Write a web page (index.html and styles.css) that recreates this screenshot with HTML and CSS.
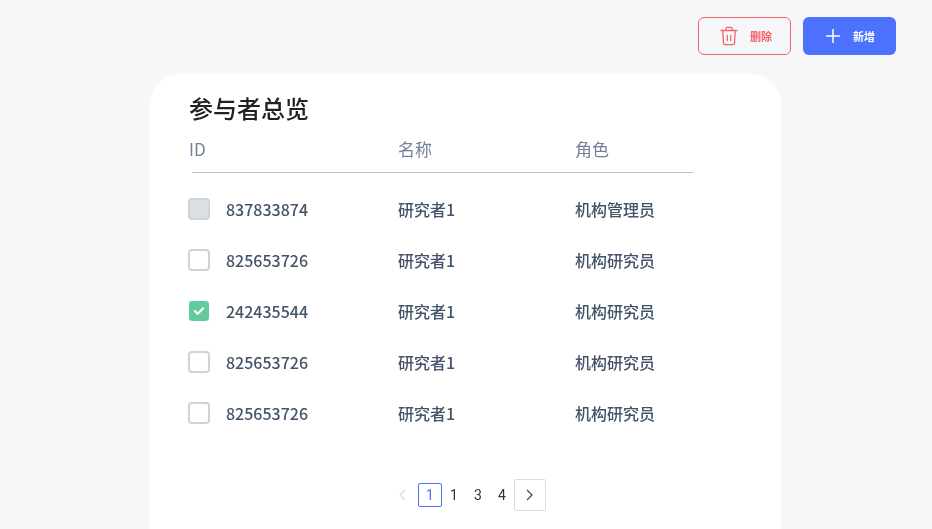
FILE: index.html
```html
<!DOCTYPE html>
<html lang="zh-CN">
<head>
<meta charset="utf-8">
<title>参与者总览</title>
<link rel="stylesheet" href="styles.css">
</head>
<body>
<div class="toolbar">
  <button class="btn btn-delete">
    <svg class="btn-icon" viewBox="0 0 18 20" width="18" height="20" fill="none" stroke="#f4646c" stroke-width="1.3" stroke-linecap="round" stroke-linejoin="round"><path d="M1 4.5h16M6 4.5V2.4q0-1 1-1h4q1 0 1 1v2.1M2.8 4.5l.7 12.6q.1 1.6 1.7 1.6h7.6q1.6 0 1.7-1.6l.7-12.6M7.3 9.5v5M10.7 9.5v5"/></svg>
    <span>删除</span>
  </button>
  <button class="btn btn-add">
    <svg class="btn-icon" viewBox="0 0 14 14" width="14" height="14" fill="none" stroke="#fff" stroke-width="1.5"><path d="M7 0v14M0 7h14"/></svg>
    <span>新增</span>
  </button>
</div>
<main class="card">
  <h1 class="title">参与者总览</h1>
  <div class="head">
    <span class="col-id">ID</span><span class="col-name">名称</span><span class="col-role">角色</span>
  </div>
  <div class="rule"></div>
  <div class="rows">
    <div class="row"><span class="check check-disabled"></span><span class="col-num">837833874</span><span class="col-name">研究者1</span><span class="col-role">机构管理员</span></div>
    <div class="row"><span class="check"></span><span class="col-num">825653726</span><span class="col-name">研究者1</span><span class="col-role">机构研究员</span></div>
    <div class="row"><span class="check check-on"><svg viewBox="0 0 12 10" width="12" height="10" fill="none" stroke="#fff" stroke-width="2.2" stroke-linecap="round" stroke-linejoin="round"><path d="M2 5.2l2.7 2.6L10 2.4"/></svg></span><span class="col-num">242435544</span><span class="col-name">研究者1</span><span class="col-role">机构研究员</span></div>
    <div class="row"><span class="check"></span><span class="col-num">825653726</span><span class="col-name">研究者1</span><span class="col-role">机构研究员</span></div>
    <div class="row"><span class="check"></span><span class="col-num">825653726</span><span class="col-name">研究者1</span><span class="col-role">机构研究员</span></div>
  </div>
  <nav class="pager">
    <span class="page page-arrow"><svg viewBox="0 0 8 12" width="8" height="12" fill="none" stroke="#d4d6da" stroke-width="1.2"><path d="M7 1L2 6l5 5"/></svg></span>
    <span class="page page-current">1</span>
    <span class="page">1</span>
    <span class="page">3</span>
    <span class="page">4</span>
    <span class="page page-next"><svg viewBox="0 0 8 12" width="8" height="12" fill="none" stroke="#444" stroke-width="1.2"><path d="M1 1l5 5-5 5"/></svg></span>
  </nav>
</main>
</body>
</html>
```
FILE: styles.css
```css
* { box-sizing: border-box; }
html, body { margin: 0; height: 100%; }
body {
  background: #f6f7f9;
  font-family: "Noto Sans CJK SC", "Noto Sans", sans-serif;
  overflow: hidden;
  height: 529px;
}
.toolbar {
  display: flex;
  justify-content: flex-end;
  gap: 12px;
  padding: 17px 36px 0 0;
  height: 74px;
  will-change: transform;
}
.btn {
  display: flex;
  align-items: center;
  height: 38px;
  border-radius: 6px;
  font-family: inherit;
  font-size: 11px;
  font-weight: 700;
  padding: 0;
}
.btn-delete {
  width: 93px;
  border: 1px solid #f4646c;
  background: #f6f7f9;
  color: #f4646c;
  padding-left: 21px;
  gap: 12px;
}
.btn-add {
  width: 93px;
  border: none;
  background: #4d71ff;
  color: #fff;
  padding-left: 23px;
  gap: 13px;
}
.card {
  margin-left: 150px;
  width: 631px;
  height: 455px;
  background: #fff;
  border-radius: 30px 30px 0 0;
  padding: 17px 0 0 39px;
  will-change: transform;
}
.title {
  margin: 0;
  font-size: 24px;
  font-weight: 500;
  line-height: 33px;
  color: #222;
}
.head {
  display: flex;
  align-items: center;
  height: 33px;
  margin-top: 8px;
  font-size: 17px;
  color: #71819b;
}
.col-id { width: 209px; }
.col-name { width: 177px; }
.col-role { width: 120px; }
.rule {
  width: 501px;
  height: 1px;
  margin: 7px 0 0 3px;
  background: #bcbec2;
}
.rows {
  margin-left: -1px;
  padding-top: 10px;
}
.row {
  display: flex;
  align-items: center;
  height: 51px;
  font-size: 16px;
  font-weight: 500;
  color: #43546a;
}
.check {
  display: flex;
  align-items: center;
  justify-content: center;
  flex: none;
  width: 22px;
  height: 22px;
  border: 2px solid #cdd3dd;
  border-radius: 4px;
  background: #fff;
}
.check-disabled { background: #dbdfe4; }
.check-on { background: #62cb9e; border: 1px solid #fff; }
.col-num { width: 172px; margin-left: 16px; }
.pager {
  display: flex;
  align-items: center;
  margin: 41px 0 0 202px;
  height: 32px;
  font-family: Roboto, "Liberation Sans", sans-serif;
  font-size: 14px;
  font-weight: 400;
  color: #333;
}
.page {
  display: flex;
  align-items: center;
  justify-content: center;
  width: 24px;
  height: 24px;
}
.page-arrow { width: 27px; padding-right: 6px; }
.page-current {
  border: 1px solid #4d71ff;
  border-radius: 2px;
  color: #4d71ff;
}
.page-next {
  width: 32px;
  height: 32px;
  border: 1px solid #dcdcdc;
  border-radius: 2px;
}
```
